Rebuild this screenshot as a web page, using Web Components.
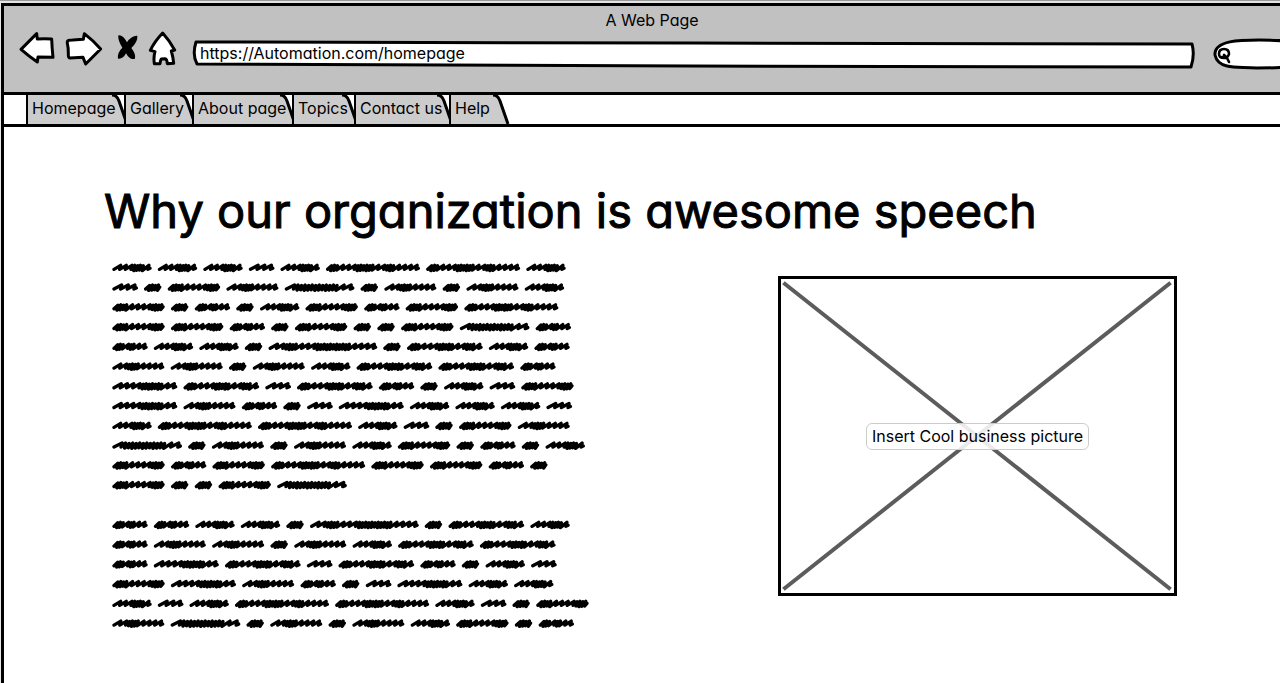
<!DOCTYPE html>
<html lang="en">
<head>
<meta charset="utf-8">
<title>A Web Page</title>
<style>
  body {
    margin: 0;
    background: #fff;
    color: #000;
    font: 16px/24px Inter, "Noto Sans", sans-serif;
    font-feature-settings: "cv11";
    overflow-x: hidden;
  }
</style>
</head>
<body>
<sketch-browser>
  <sketch-toolbar slot="toolbar" page-title="A Web Page" url="https://Automation.com/homepage"></sketch-toolbar>
  <sketch-tabs slot="tabs">
    <sketch-tab style="--tab-width: 98px">Homepage</sketch-tab>
    <sketch-tab style="--tab-width: 68px">Gallery</sketch-tab>
    <sketch-tab style="--tab-width: 100px">About page</sketch-tab>
    <sketch-tab style="--tab-width: 62px">Topics</sketch-tab>
    <sketch-tab style="--tab-width: 95px">Contact us</sketch-tab>
    <sketch-tab style="--tab-width: 56px">Help</sketch-tab>
  </sketch-tabs>
  <sketch-article>
    <span slot="title">Why our organization is awesome speech</span>
    <scribble-text slot="text" lines="cccbcjjc baefhafafc eadacedej eedaeaaehd dccakaicd ffafciid gibidacbe gfdabgcccb cjjcbaef hafafceadac edejeeda eaaeh"></scribble-text>
    <scribble-text slot="text" lines="ddccakaic dffafcii dgibidacb egfdabgcc cbcjjcbae fhafafcead"></scribble-text>
    <image-placeholder slot="picture">Insert Cool business picture</image-placeholder>
  </sketch-article>
</sketch-browser>

<script>
function mount(host, html) {
  const root = host.attachShadow({ mode: 'open' });
  const template = document.createElement('template');
  template.innerHTML = html;
  root.append(template.content.cloneNode(true));
  return root;
}

customElements.define('sketch-browser', class extends HTMLElement {
  constructor() {
    super();
    mount(this, `
      <style>
        :host { display: block; box-sizing: border-box; min-height: 100vh; padding: 3px 0 0 1px;
                background: linear-gradient(#999 0 1px, #e4e4e4 1px 3px, #e8e8e8 3px); }
        .frame { box-sizing: border-box; min-height: calc(100vh - 3px); border: solid #000; border-width: 3px 0 0 3px; background: #fff; }
      </style>
      <div class="frame">
        <slot name="toolbar"></slot>
        <slot name="tabs"></slot>
        <slot></slot>
      </div>`);
  }
});

customElements.define('sketch-toolbar', class extends HTMLElement {
  connectedCallback() {
    const root = mount(this, `
      <style>
        :host { display: block; background: #c1c1c1; border-bottom: 3px solid #000; }
        .title { padding: 3px 0 0 20px; line-height: 22px; text-align: center; }
        .row { display: flex; align-items: stretch; gap: 8px; height: 40px; padding: 0 0 21px 14px; }
        button { flex: none; padding: 0; border: 0; background: none; display: block; }
        svg { display: block; height: 40px; }
        .ink { fill: #fff; stroke: #000; stroke-width: 9; stroke-linejoin: round; stroke-linecap: round; }
        label { display: grid; }
        label > * { grid-area: 1 / 1; min-width: 0; }
        .url { flex: 1; margin: 0 10px 0 6px; }
        .search { flex: none; width: 67px; overflow: hidden; }
        .url svg { width: 100%; }
        .line { fill: #fff; stroke: #000; stroke-width: 3; stroke-linejoin: round; vector-effect: non-scaling-stroke; }
        input { box-sizing: border-box; width: 100%; height: 34px; align-self: end; padding: 0 8px 2px; border: 0; outline: 0;
                background: none; color: inherit; font: inherit; font-feature-settings: inherit; }
        .search input { padding-left: 24px; }
      </style>
      <div class="title"></div>
      <div class="row">
        <button aria-label="Back"><svg width="39" viewBox="54 93 117 120"><path class="ink" d="M63 148 L110 101 L112 117 Q134 116 155 117 Q156 144 159 172 L114 171 L112 186 Q86 168 63 148Z"/></svg></button>
        <button aria-label="Forward"><svg width="39" viewBox="195 93 117 120"><path class="ink" d="M202 124 Q203 120 218 120 L250 118 L253 101 Q279 121 302 147 L257 192 L249 172 L210 174 Q204 173 205 160 Q205 141 202 130Z"/></svg></button>
        <button aria-label="Stop"><svg width="27" viewBox="336 93 81 120"><path d="M355 106 Q369 104 381 127 Q394 106 412 107 Q414 124 394 144 Q408 162 405 176 Q390 182 378 160 Q369 178 354 176 Q351 158 367 143 Q353 121 355 106Z"/></svg></button>
        <button aria-label="Home"><svg width="31" viewBox="441 93 93 120"><path class="ink" d="M488 99 Q508 121 524 150 L514 153 Q520 174 521 190 L502 191 Q501 177 495 176 L484 177 Q481 181 480 191 L463 191 Q460 172 465 155 L451 151 Q463 125 488 99Z"/></svg></button>
        <label class="url">
          <svg viewBox="0 0 1003 40" preserveAspectRatio="none" aria-hidden="true"><path class="line" d="M4 11 L500 12 L1000 13 Q1003 24 999 36 L500 35 L5 33 Q0 24 4 11Z"/></svg>
          <input type="text" aria-label="Address">
        </label>
        <label class="search">
          <svg width="108" viewBox="0 0 108 40" aria-hidden="true">
            <path class="line" d="M2 24 C1 9 28 9 46 9 C74 9 102 11 102 24 C102 37 70 37 44 37 C30 36 22 37 14 35 Q4 33 2 24Z"/>
            <path d="M11 18 Q16 18 16 23 Q15 27 11 27 Q6 27 6 23 Q6 18 11 18 M11 24 L14 27 L16 31 M9 26 L13 27" fill="none" stroke="#000" stroke-width="2.6" stroke-linecap="round"/>
          </svg>
          <input type="search" aria-label="Search">
        </label>
      </div>`);
    root.querySelector('.title').textContent = this.getAttribute('page-title');
    root.querySelector('.url input').value = this.getAttribute('url');
  }
});

customElements.define('sketch-tabs', class extends HTMLElement {
  constructor() {
    super();
    mount(this, `
      <style>
        :host { display: block; border-bottom: 3px solid #000; }
        nav { display: flex; height: 29px; padding-left: 22px; }
      </style>
      <nav aria-label="Pages"><slot></slot></nav>`);
  }
});

customElements.define('sketch-tab', class extends HTMLElement {
  constructor() {
    super();
    mount(this, `
      <style>
        :host { display: block; flex: none; width: var(--tab-width); position: relative; isolation: isolate; }
        a { display: flex; height: 29px; border-left: 2px solid #000; margin-right: -6px; color: inherit; text-decoration: none; }
        span { position: relative; z-index: 1; flex: 1; min-width: 0; box-sizing: border-box; padding-left: 4px; line-height: 27px; white-space: nowrap; background: #ccc; }
        svg { display: block; flex: none; }
      </style>
      <a href="#"><span><slot></slot></span><svg width="18" height="29" viewBox="0 0 18 29" aria-hidden="true"><path d="M0 0 H2 Q5 1 6 5 L15 29 H0Z" fill="#ccc"/><path d="M0 0 Q5 0 7 6 L15 29" fill="none" stroke="#000" stroke-width="3"/></svg></a>`);
  }
});

customElements.define('sketch-article', class extends HTMLElement {
  constructor() {
    super();
    mount(this, `
      <style>
        :host { display: block; padding: 54px 103px 40px 100px; }
        h1 { margin: 0; font-size: 47px; line-height: 60px; font-weight: 400; -webkit-text-stroke: 1px #000; }
        .columns { display: flex; justify-content: space-between; gap: 40px; padding-top: 17px; }
        .text { display: flex; flex-direction: column; gap: 20px; padding-left: 4px; }
        .picture { flex: 0 1 399px; padding-top: 18px; }
      </style>
      <h1><slot name="title"></slot></h1>
      <div class="columns">
        <div class="text"><slot name="text"></slot></div>
        <div class="picture"><slot name="picture"></slot></div>
      </div>`);
  }
});

/* Filler copy drawn as pen scribbles. Each letter of the "lines" attribute is one
   scribbled word: its ink width, its advance, and its strokes, where n is an open
   wave and u a tight, dense one. Units are a third of a pixel. */
const WORDS = {
  a: [53, 71.3, 'uuuu'],
  b: [78, 95, 'nnn'],
  c: [119, 136.5, 'nnnuuuun'],
  d: [107, 124.5, 'uuunuunn'],
  e: [158, 176, 'uuuunnnnuuuu'],
  f: [157, 175, 'nnuuuunnnn'],
  g: [196, 213.5, 'nnnnuuuuuuunn'],
  h: [210, 227.5, 'nuuuuuuuuuuuunn'],
  i: [228, 245.5, 'uuunnnuuuuunnuuun'],
  j: [283, 300.5, 'uuunnnuuuuuunnuuunnnn'],
  k: [327, 344, 'nnuuuunnnuuuuuuuuuuunnnn']
};
function scribble(key, x0, y0) {
  const [ink, , strokes] = WORDS[key];
  const weight = { n: 16, u: 8 };
  let total = 5;
  for (const s of strokes) total += weight[s];
  const scale = (ink - 12) / total;
  let x = x0 + 6;
  let d = `M${x} ${y0 + 5}`;
  let i = 0;
  for (const s of strokes) {
    const w = weight[s] * scale;
    const top = y0 - (s === 'u' ? 6 + (i % 2) : 7);
    const low = y0 + (s === 'u' ? 9 - (i % 3) : 5);
    d += ` L${(x + w + 3).toFixed(1)} ${top} L${(x + w).toFixed(1)} ${low}`;
    x += w;
    i++;
  }
  return d + ` L${(x0 + ink - 5).toFixed(1)} ${y0 + (strokes.endsWith('n') ? 2 : -1)}`;
}
customElements.define('scribble-text', class extends HTMLElement {
  connectedCallback() {
    const lines = this.getAttribute('lines').split(' ');
    let d = '';
    lines.forEach((line, row) => {
      let x = 12;
      for (const key of line) {
        d += scribble(key, x, 29 + row * 59.25);
        x += WORDS[key][1];
      }
    });
    const height = Math.round(lines.length * 19.75);
    mount(this, `
      <style>
        :host { display: block; }
        svg { display: block; width: 490px; max-width: 100%; }
        path { fill: none; stroke: #000; stroke-width: 10; stroke-linejoin: round; stroke-linecap: round; }
      </style>
      <svg viewBox="0 0 1470 ${height * 3}" role="img" aria-label="Placeholder paragraph"><path d="${d}"/></svg>`);
  }
});

customElements.define('image-placeholder', class extends HTMLElement {
  constructor() {
    super();
    mount(this, `
      <style>
        :host { display: grid; box-sizing: border-box; height: 320px; border: 3px solid #000; place-items: center; }
        svg, span { grid-area: 1 / 1; }
        svg { display: block; width: 100%; height: 100%; min-height: 0; }
        line { stroke: #5c5c5c; stroke-width: 4; vector-effect: non-scaling-stroke; stroke-linecap: square; }
        span { position: relative; box-sizing: border-box; height: 27px; padding: 0 5px; border: 1px solid #ccc;
               border-radius: 6px; background: rgba(255, 255, 255, 0.87); line-height: 24px; white-space: nowrap; }
      </style>
      <svg viewBox="0 0 393 314" preserveAspectRatio="none" aria-hidden="true"><line x1="4" y1="5" x2="388" y2="309"/><line x1="388" y1="5" x2="4" y2="309"/></svg>
      <span><slot></slot></span>`);
  }
});
</script>
</body>
</html>
